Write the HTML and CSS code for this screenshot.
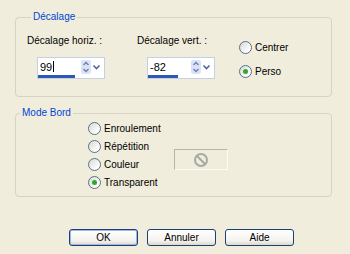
FILE: index.html
```html
<!DOCTYPE html>
<html lang="fr">
  <head>
    <meta charset="UTF-8" />
    <title>Décalage</title>
    <link rel="stylesheet" href="styles.css">
  </head>
  <body>
    <div class="dialog">
      <fieldset class="group group-offset">
        <legend>Décalage</legend>
        <div class="offset-grid">
          <div class="offset-col">
            <p class="label">Décalage horiz. :</p>
            <div class="spin">
              <div class="spin-row">
                <span class="spin-value">99<span class="caret"></span></span>
                <svg class="spin-arrows" width="22" height="14" viewBox="0 0 22 14">
                  <rect x="0" y="0" width="10" height="14" rx="2" fill="#dde3f6" />
                  <path d="M2.5 5 L5 2.5 L7.5 5" fill="none" stroke="#6a7fb8" stroke-width="1.4" />
                  <path d="M2.5 9 L5 11.5 L7.5 9" fill="none" stroke="#6a7fb8" stroke-width="1.4" />
                  <path d="M12.5 5.5 L15.5 8.5 L18.5 5.5" fill="none" stroke="#4d66a8" stroke-width="1.6" />
                </svg>
              </div>
              <div class="spin-bar"><div class="spin-fill" style="width: 37px"></div></div>
            </div>
          </div>
          <div class="offset-col">
            <p class="label">Décalage vert. :</p>
            <div class="spin">
              <div class="spin-row">
                <span class="spin-value">-82</span>
                <svg class="spin-arrows" width="22" height="14" viewBox="0 0 22 14">
                  <rect x="0" y="0" width="10" height="14" rx="2" fill="#dde3f6" />
                  <path d="M2.5 5 L5 2.5 L7.5 5" fill="none" stroke="#6a7fb8" stroke-width="1.4" />
                  <path d="M2.5 9 L5 11.5 L7.5 9" fill="none" stroke="#6a7fb8" stroke-width="1.4" />
                  <path d="M12.5 5.5 L15.5 8.5 L18.5 5.5" fill="none" stroke="#4d66a8" stroke-width="1.6" />
                </svg>
              </div>
              <div class="spin-bar"><div class="spin-fill" style="width: 30px"></div></div>
            </div>
          </div>
          <div class="radio-col">
            <label class="radio"><span class="dot"></span>Centrer</label>
            <label class="radio"><span class="dot checked"></span>Perso</label>
          </div>
        </div>
      </fieldset>

      <fieldset class="group group-border">
        <legend>Mode Bord</legend>
        <div class="border-list">
          <label class="radio"><span class="dot"></span>Enroulement</label>
          <label class="radio"><span class="dot"></span>Répétition</label>
          <div class="radio radio-color">
            <span class="dot"></span>Couleur
            <span class="color-box">
              <svg width="16" height="16" viewBox="0 0 16 16">
                <circle cx="8" cy="8" r="6" fill="none" stroke="#a9a9a4" stroke-width="2" />
                <path d="M4 4 L12 12" stroke="#a9a9a4" stroke-width="2" />
              </svg>
            </span>
          </div>
          <label class="radio radio-last"><span class="dot checked"></span>Transparent</label>
        </div>
      </fieldset>

      <div class="buttons">
        <button class="btn btn-default">OK</button>
        <button class="btn">Annuler</button>
        <button class="btn">Aide</button>
      </div>
    </div>
  </body>
</html>
```

FILE: styles.css
```css
body {
  margin: 0;
  background-color: #f0eddc;
  font-family: "Liberation Sans", Arial, sans-serif;
  font-size: 10px;
  color: #000;
}
.dialog {
  width: 350px;
  height: 254px;
  box-sizing: border-box;
  padding: 11px 0 0 15px;
}
.group {
  width: 317px;
  box-sizing: border-box;
  margin: 0;
  border: 1px solid #d6d3c2;
  border-radius: 4px;
}
.group legend {
  color: #0046d5;
  padding: 0 2px;
  margin-left: 4px;
  line-height: 12px;
}
.group-offset {
  padding: 12px 0 17px 11px;
}
.offset-grid {
  display: grid;
  grid-template-columns: 110px 102px 1fr;
}
.label {
  margin: 0 0 10px;
  line-height: 12px;
}
.spin {
  margin-left: 10px;
  width: 68px;
  height: 22px;
  box-sizing: border-box;
  background: #fff;
  border: 1px solid #c4d0e4;
  display: flex;
  flex-direction: column;
}
.spin-row {
  flex: 1;
  display: flex;
  align-items: center;
  justify-content: space-between;
  padding: 0 1px 0 2px;
}
.spin-value {
  font-size: 11px;
  display: flex;
  align-items: center;
}
.caret {
  display: inline-block;
  width: 1px;
  height: 11px;
  margin-left: 1px;
  background: #000;
}
.spin-bar {
  height: 3px;
}
.spin-fill {
  height: 3px;
  background: #2d59b4;
}
.radio-col {
  display: flex;
  flex-direction: column;
  gap: 11px;
  margin-top: 6px;
}
.radio {
  display: flex;
  align-items: center;
  height: 13px;
  line-height: 13px;
}
.dot {
  width: 13px;
  height: 13px;
  box-sizing: border-box;
  border: 1px solid #56718f;
  border-radius: 50%;
  background: linear-gradient(135deg, #d8d8d2, #fff 80%);
  margin-right: 3px;
  display: flex;
  align-items: center;
  justify-content: center;
}
.dot.checked::after {
  content: "";
  width: 5px;
  height: 5px;
  border-radius: 50%;
  background: #2fa82f;
}
.group-border {
  margin-top: 10px;
  padding: 3px 0 7px 0;
}
.border-list {
  display: flex;
  flex-direction: column;
  margin-left: 72px;
}
.border-list .radio + .radio {
  margin-top: 5px;
}
.border-list .radio-color {
  margin-top: 8px;
  align-items: flex-start;
}
.border-list .radio-last {
  margin-top: 4px;
}
.color-box {
  width: 54px;
  height: 21px;
  box-sizing: border-box;
  margin: -9px 0 1px 35px;
  border: 1px solid;
  border-color: #b8b5a5 #fbfaf4 #fbfaf4 #b8b5a5;
  display: flex;
  align-items: center;
  justify-content: center;
}
.buttons {
  display: flex;
  gap: 9px;
  margin: 32px 0 0 54px;
}
.btn {
  width: 69px;
  height: 17px;
  padding: 0;
  font-family: inherit;
  font-size: 10px;
  color: #000;
  border: 1px solid #1d3f73;
  border-radius: 3px;
  background: linear-gradient(#ffffff, #f4f3ee 70%, #dcd9cc);
}
.btn-default {
  box-shadow: inset 0 0 0 1px #9fb6e6;
}
```
